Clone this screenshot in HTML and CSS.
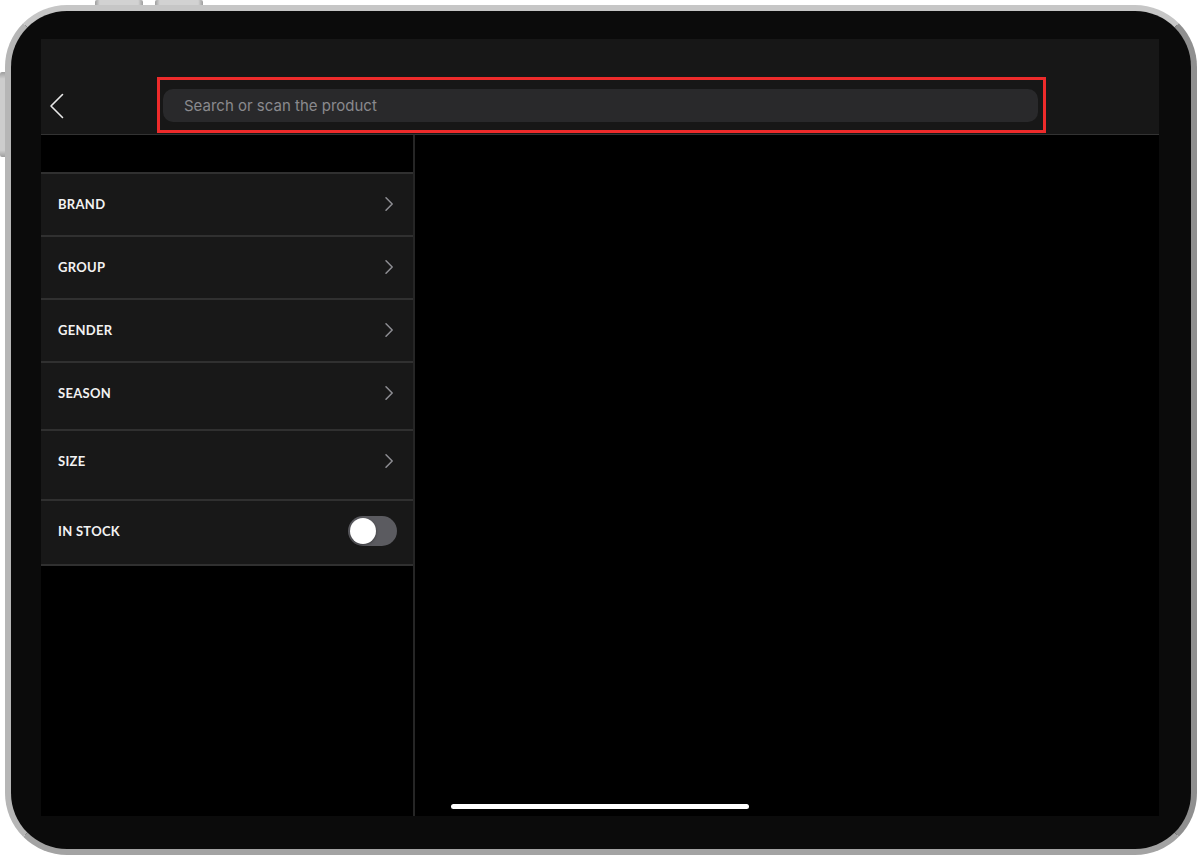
FILE: index.html
```html
<!DOCTYPE html>
<html lang="en">
<head>
<meta charset="utf-8">
<title>Product search</title>
<link rel="stylesheet" href="styles.css">
</head>
<body>
<div class="device">
  <span class="hw-btn hw-btn--top1"></span>
  <span class="hw-btn hw-btn--top2"></span>
  <span class="hw-btn hw-btn--side"></span>
  <div class="screen">
    <header class="navbar">
      <button class="back" aria-label="Back">
        <svg width="16" height="26" viewBox="0 0 16 26"><path d="M13.5 1.5 L2 13 L13.5 24.5" fill="none" stroke="#e8e8e8" stroke-width="1.6" stroke-linecap="round" stroke-linejoin="round"/></svg>
      </button>
      <div class="highlight">
        <div class="search">Search or scan the product</div>
      </div>
    </header>
    <div class="body">
      <aside class="sidebar">
        <div class="sidebar-head"></div>
        <ul class="filters">
          <li class="row"><span class="label">BRAND</span><svg class="chev" width="10" height="16" viewBox="0 0 10 16"><path d="M2 1.8 L8.2 8 L2 14.2" fill="none" stroke="#8e8e93" stroke-width="1.5" stroke-linecap="round" stroke-linejoin="round"/></svg></li>
          <li class="row"><span class="label">GROUP</span><svg class="chev" width="10" height="16" viewBox="0 0 10 16"><path d="M2 1.8 L8.2 8 L2 14.2" fill="none" stroke="#8e8e93" stroke-width="1.5" stroke-linecap="round" stroke-linejoin="round"/></svg></li>
          <li class="row"><span class="label">GENDER</span><svg class="chev" width="10" height="16" viewBox="0 0 10 16"><path d="M2 1.8 L8.2 8 L2 14.2" fill="none" stroke="#8e8e93" stroke-width="1.5" stroke-linecap="round" stroke-linejoin="round"/></svg></li>
          <li class="row row--x5"><span class="label">SEASON</span><svg class="chev" width="10" height="16" viewBox="0 0 10 16"><path d="M2 1.8 L8.2 8 L2 14.2" fill="none" stroke="#8e8e93" stroke-width="1.5" stroke-linecap="round" stroke-linejoin="round"/></svg></li>
          <li class="row row--x6"><span class="label">SIZE</span><svg class="chev" width="10" height="16" viewBox="0 0 10 16"><path d="M2 1.8 L8.2 8 L2 14.2" fill="none" stroke="#8e8e93" stroke-width="1.5" stroke-linecap="round" stroke-linejoin="round"/></svg></li>
          <li class="row row--x2 row--toggle"><span class="label">IN STOCK</span><span class="toggle"><span class="knob"></span></span></li>
        </ul>
      </aside>
      <main class="content"></main>
    </div>
    <div class="home-indicator"></div>
  </div>
</div>
</body>
</html>
```

FILE: styles.css
```css
html, body {
  margin: 0;
  padding: 0;
}

html { background: #ffffff; }

body {
  width: 1200px;
  height: 857px;
  overflow: hidden;
  font-family: "Lato", "Inter", "Liberation Sans", sans-serif;
}

.device {
  position: relative;
  box-sizing: border-box;
  width: 1192px;
  height: 850px;
  margin: 5px 0 0 5px;
  padding: 28px 0 0 30px;
  border: 6px solid #bdbdbd;
  border-top-color: #c6c6c6;
  border-right-color: #8f8f8f;
  border-bottom-color: #a3a3a3;
  border-left-color: #b6b6b6;
  border-radius: 62px;
  background: #0b0b0b;
}

.hw-btn {
  position: absolute;
  background: linear-gradient(90deg, #9e9e9e 0%, #d2d2d2 10%, #d2d2d2 90%, #9e9e9e 100%);
  border-radius: 2px 2px 0 0;
}
.hw-btn--top1 { top: -11px; left: 84px; width: 48px; height: 5px; }
.hw-btn--top2 { top: -11px; left: 144px; width: 48px; height: 5px; }
.hw-btn--side {
  top: 61px;
  left: -11px;
  width: 5px;
  height: 85px;
  border-radius: 2px 0 0 2px;
  background: linear-gradient(180deg, #9e9e9e 0%, #cdcdcd 8%, #cdcdcd 92%, #9e9e9e 100%);
}

.screen {
  position: relative;
  width: 1118px;
  height: 777px;
  background: #000;
  display: flex;
  flex-direction: column;
  overflow: hidden;
}

.navbar {
  flex: 0 0 auto;
  height: 95px;
  background: #171717;
  border-bottom: 1px solid #333333;
  display: flex;
  align-items: flex-start;
  padding-left: 8px;
}

.back {
  margin: 54px 0 0 0;
  padding: 0;
  border: 0;
  background: none;
  width: 16px;
  height: 26px;
  display: block;
}
.back svg { display: block; }

.highlight {
  box-sizing: border-box;
  margin: 38px 0 0 92px;
  width: 889px;
  height: 56px;
  border: 3px solid #ee2b2b;
  padding: 9px 5px 8px 3px;
}

.search {
  box-sizing: border-box;
  height: 33px;
  border-radius: 10px;
  background: #29292b;
  color: #8a8a8e;
  font-family: "Inter", "Liberation Sans", sans-serif;
  font-size: 15px;
  line-height: 33px;
  padding-left: 21px;
}

.body {
  flex: 1 1 auto;
  display: flex;
  min-height: 0;
}

.sidebar {
  flex: 0 0 372px;
  border-right: 2px solid #262626;
  background: #000;
}

.sidebar-head { height: 37px; }

.filters {
  list-style: none;
  margin: 0;
  padding: 0;
  border-top: 2px solid #303030;
}

.row {
  display: flex;
  align-items: center;
  justify-content: space-between;
  height: 61px;
  padding: 0 19px 0 17px;
  background: #181818;
  border-bottom: 2px solid #303030;
}
.row--x5 { padding-bottom: 5px; }
.row--x6 { padding-bottom: 7px; }
.row--x2 { padding-bottom: 2px; }
.row--toggle { padding-right: 16px; }

.label {
  color: #f2f2f2;
  font-family: "Lato", sans-serif;
  font-weight: 700;
  font-size: 13px;
  letter-spacing: 0.3px;
  margin-top: -2px;
}

.chev { display: block; margin-top: -1px; }

.toggle {
  position: relative;
  width: 49px;
  height: 30px;
  border-radius: 15px;
  background: #5b5b60;
  margin-top: -2px;
}
.knob {
  position: absolute;
  top: 2px;
  left: 2px;
  width: 26px;
  height: 26px;
  border-radius: 50%;
  background: #ffffff;
  box-shadow: 0 1px 3px rgba(0,0,0,0.35);
}

.content {
  flex: 1 1 auto;
  background: #000;
}

.home-indicator {
  position: absolute;
  left: 410px;
  bottom: 7px;
  width: 298px;
  height: 5px;
  border-radius: 3px;
  background: #ffffff;
}
```
